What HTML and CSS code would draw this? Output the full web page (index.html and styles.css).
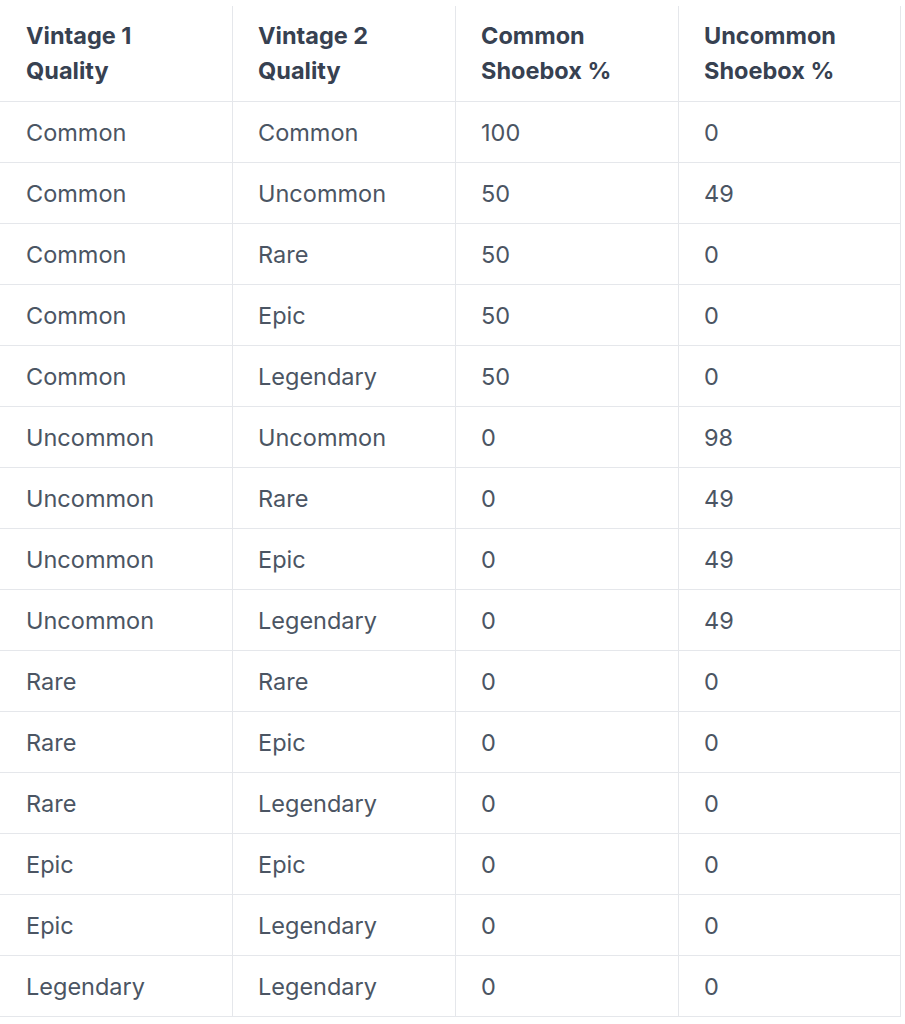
FILE: index.html
```html
<!DOCTYPE html>
<html>
<head>
<meta charset="utf-8">
<link rel="stylesheet" href="styles.css">
</head>
<body>
<div class="wrap">
<table class="odds">
<colgroup><col class="c1"><col class="c"><col class="c"><col class="c"></colgroup>
<thead>
<tr><th>Vintage 1<br>Quality</th><th>Vintage 2<br>Quality</th><th>Common<br>Shoebox %</th><th>Uncommon<br>Shoebox %</th></tr>
</thead>
<tbody>
<tr><td>Common</td><td>Common</td><td>100</td><td>0</td></tr>
<tr><td>Common</td><td>Uncommon</td><td>50</td><td>49</td></tr>
<tr><td>Common</td><td>Rare</td><td>50</td><td>0</td></tr>
<tr><td>Common</td><td>Epic</td><td>50</td><td>0</td></tr>
<tr><td>Common</td><td>Legendary</td><td>50</td><td>0</td></tr>
<tr><td>Uncommon</td><td>Uncommon</td><td>0</td><td>98</td></tr>
<tr><td>Uncommon</td><td>Rare</td><td>0</td><td>49</td></tr>
<tr><td>Uncommon</td><td>Epic</td><td>0</td><td>49</td></tr>
<tr><td>Uncommon</td><td>Legendary</td><td>0</td><td>49</td></tr>
<tr><td>Rare</td><td>Rare</td><td>0</td><td>0</td></tr>
<tr><td>Rare</td><td>Epic</td><td>0</td><td>0</td></tr>
<tr><td>Rare</td><td>Legendary</td><td>0</td><td>0</td></tr>
<tr><td>Epic</td><td>Epic</td><td>0</td><td>0</td></tr>
<tr><td>Epic</td><td>Legendary</td><td>0</td><td>0</td></tr>
<tr><td>Legendary</td><td>Legendary</td><td>0</td><td>0</td></tr>
</tbody>
</table>
</div>
</body>
</html>
```
FILE: styles.css
```css
html, body {
  margin: 0;
  padding: 0;
  background: #ffffff;
}
.wrap {
  padding-top: 6px;
}
.odds {
  border-collapse: separate;
  border-spacing: 0;
  table-layout: fixed;
  width: 901px;
  font-family: Inter, "Noto Sans", sans-serif;
  font-size: 23.5px;
  line-height: 35px;
  color: #4b5563;
}
.odds col.c1 { width: 232px; }
.odds col.c { width: 223px; }
.odds th, .odds td {
  box-sizing: border-box;
  text-align: left;
  vertical-align: top;
  padding: 13px 12px 12px 25px;
  border-bottom: 1px solid #e5e7eb;
  border-left: 1px solid #e5e7eb;
  white-space: nowrap;
}
.odds th:first-child, .odds td:first-child {
  border-left: none;
  padding-left: 26px;
}
.odds th:last-child, .odds td:last-child {
  border-right: 1px solid #e5e7eb;
}
.odds th {
  font-weight: 700;
  color: #374151;
  padding-top: 12px;
  padding-bottom: 13px;
}
```
